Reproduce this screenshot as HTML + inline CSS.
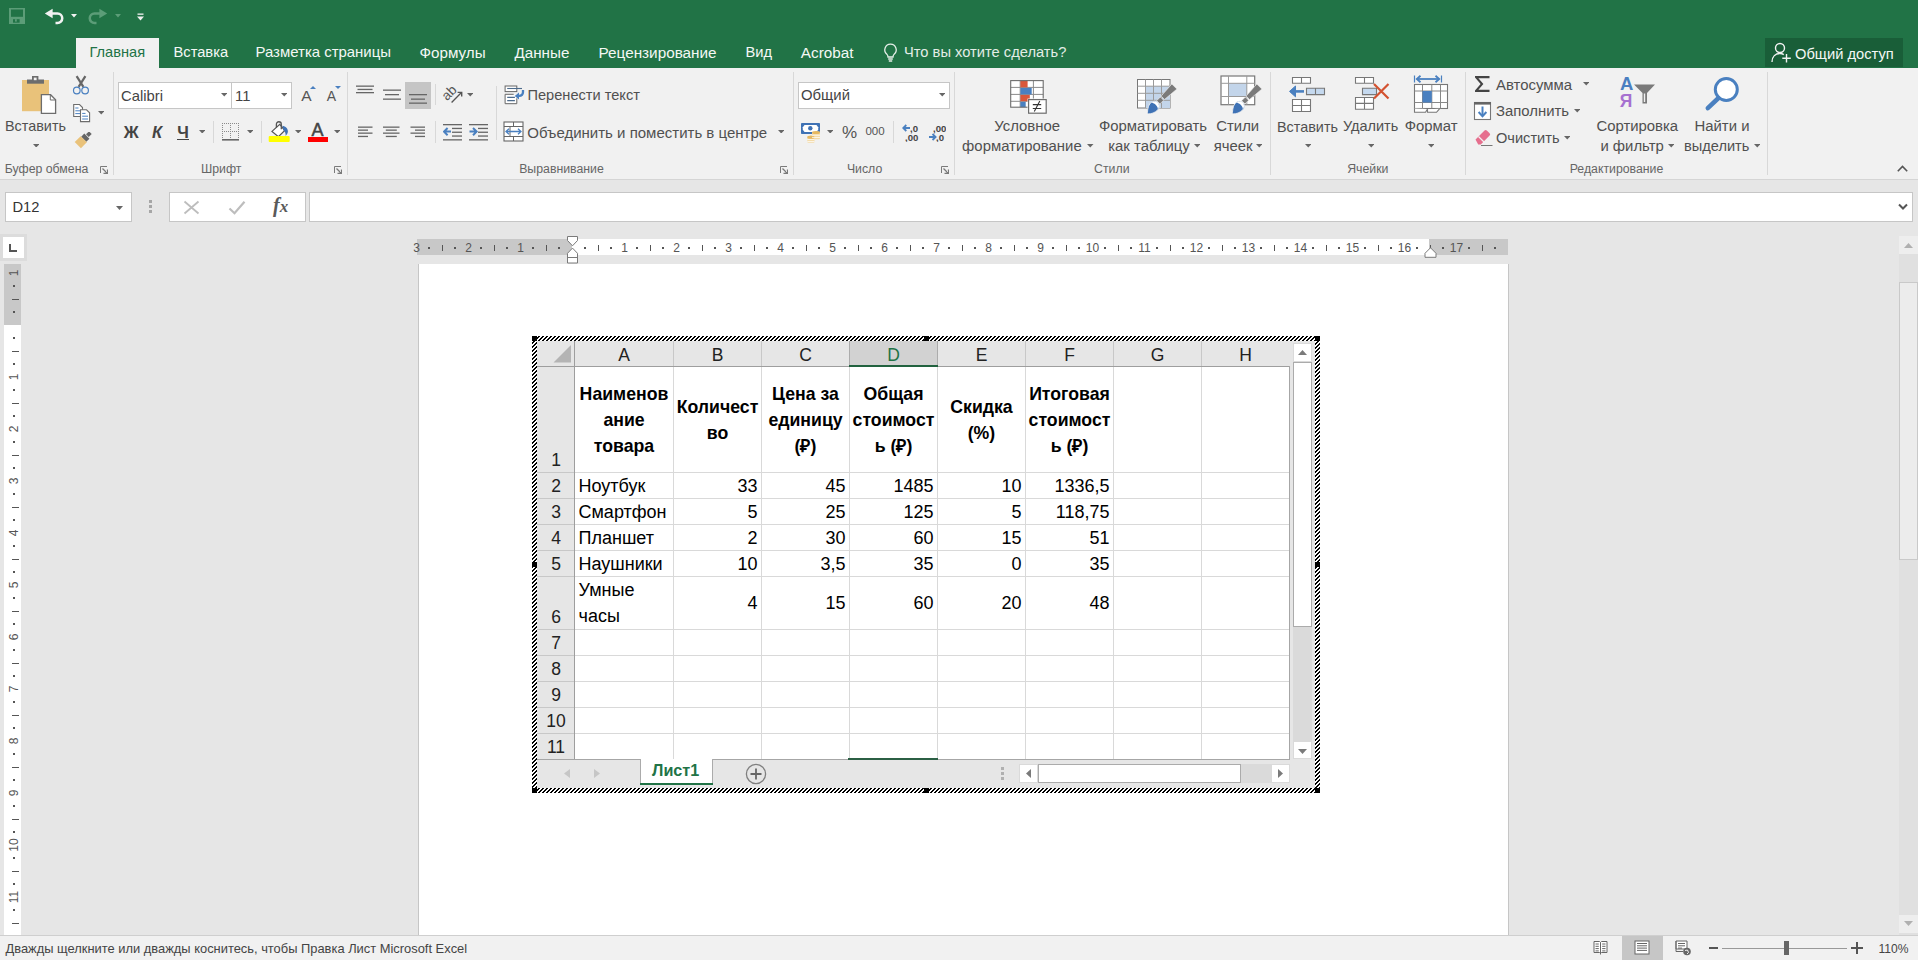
<!DOCTYPE html>
<html><head><meta charset="utf-8"><style>
html,body{margin:0;padding:0}
body{width:1918px;height:960px;overflow:hidden;position:relative;background:#e6e6e6;font-family:"Liberation Sans",sans-serif}
.t{position:absolute;line-height:1;white-space:pre}
.r{position:absolute;display:block}
</style></head><body>

<div class="r" style="left:0px;top:0px;width:1918px;height:68px;background:#217346;"></div>
<svg class="r" style="left:9px;top:8px" width="16" height="16" viewBox="0 0 16 16"><rect x="0" y="0" width="16" height="16" fill="#5c9d78"/>
<rect x="2" y="1.5" width="12" height="7.3" fill="#217346"/>
<rect x="4" y="11.2" width="6.6" height="3.5" fill="#217346"/>
<rect x="6" y="11.2" width="1.8" height="2.4" fill="#5c9d78"/></svg>
<svg class="r" style="left:44px;top:8px" width="20" height="17" viewBox="0 0 20 17"><path d="M5 5.5H13.5A4.75 4.75 0 0 1 13.5 15H11.5" fill="none" stroke="#f2f2f2" stroke-width="2.5"/>
<path d="M0.8 5.5L8.6 0.8V10.2Z" fill="#f2f2f2"/></svg>
<svg class="r" style="left:71.0px;top:14px" width="6" height="3.5" viewBox="0 0 6 3.5"><path d="M0 0H6L3.0 3.5Z" fill="#f2f2f2"/></svg>
<svg class="r" style="left:88px;top:8px" width="20" height="17" viewBox="0 0 20 17"><path d="M15 5.5H6.5A4.75 4.75 0 0 0 6.5 15H8.5" fill="none" stroke="#5c9d78" stroke-width="2.5"/>
<path d="M19.2 5.5L11.4 0.8V10.2Z" fill="#5c9d78"/></svg>
<svg class="r" style="left:115.0px;top:14px" width="6" height="3.5" viewBox="0 0 6 3.5"><path d="M0 0H6L3.0 3.5Z" fill="#5c9d78"/></svg>
<svg class="r" style="left:137px;top:13px" width="7" height="8" viewBox="0 0 7 8"><rect x="0.5" y="0.5" width="6" height="1.3" fill="#f2f2f2"/><path d="M0 3.5H7L3.5 7.5Z" fill="#f2f2f2"/></svg>
<div class="r" style="left:76px;top:38px;width:83px;height:30px;background:#f1f1f1;"></div>
<div class="t" style="left:89.50px;top:45.19px;font-size:14.6px;color:#217346;font-weight:normal;">Главная</div>
<div class="t" style="left:173.50px;top:45.11px;font-size:14.7px;color:#f4f8f5;font-weight:normal;">Вставка</div>
<div class="t" style="left:255.50px;top:44.89px;font-size:14.95px;color:#f4f8f5;font-weight:normal;">Разметка страницы</div>
<div class="t" style="left:419.50px;top:44.68px;font-size:15.2px;color:#f4f8f5;font-weight:normal;">Формулы</div>
<div class="t" style="left:514.50px;top:44.68px;font-size:15.2px;color:#f4f8f5;font-weight:normal;">Данные</div>
<div class="t" style="left:598.50px;top:44.59px;font-size:15.3px;color:#f4f8f5;font-weight:normal;">Рецензирование</div>
<div class="t" style="left:745.50px;top:45.11px;font-size:14.7px;color:#f4f8f5;font-weight:normal;">Вид</div>
<div class="t" style="left:800.80px;top:44.59px;font-size:15.3px;color:#f4f8f5;font-weight:normal;">Acrobat</div>
<svg class="r" style="left:883px;top:43px" width="15" height="19" viewBox="0 0 15 19"><path d="M7.5 1.2A5.6 5.6 0 0 0 3.6 10.9C4.6 12 5 12.8 5 14H10C10 12.8 10.4 12 11.4 10.9A5.6 5.6 0 0 0 7.5 1.2Z" fill="none" stroke="#e6efe9" stroke-width="1.3"/>
<path d="M5.2 16H9.8M5.8 18H9.2" stroke="#e6efe9" stroke-width="1.3"/></svg>
<div class="t" style="left:904.00px;top:45.11px;font-size:14.7px;color:#e3ede6;font-weight:normal;">Что вы хотите сделать?</div>
<div class="r" style="left:1765px;top:38px;width:138px;height:29px;background:#195e38;"></div>
<svg class="r" style="left:1771px;top:42px" width="21" height="21" viewBox="0 0 21 21"><circle cx="9" cy="6" r="4.5" fill="none" stroke="#f2f2f2" stroke-width="1.4"/>
<path d="M1 20C1 14.5 4.5 11.5 9 11.5C10.5 11.5 11.8 11.9 12.8 12.6" fill="none" stroke="#f2f2f2" stroke-width="1.4"/>
<path d="M15.5 12V20.5M11.3 16.2H19.8" stroke="#f2f2f2" stroke-width="1.4"/></svg>
<div class="t" style="left:1795.00px;top:46.80px;font-size:14.7px;color:#f4f8f5;font-weight:normal;">Общий доступ</div>
<div class="r" style="left:0px;top:68px;width:1918px;height:111px;background:#f1f1f1;"></div>
<div class="r" style="left:0px;top:179px;width:1918px;height:1px;background:#d5d5d5;"></div>
<div class="r" style="left:113px;top:72px;width:1px;height:103px;background:#d8d8d8;"></div>
<div class="r" style="left:347px;top:72px;width:1px;height:103px;background:#d8d8d8;"></div>
<div class="r" style="left:793px;top:72px;width:1px;height:103px;background:#d8d8d8;"></div>
<div class="r" style="left:954px;top:72px;width:1px;height:103px;background:#d8d8d8;"></div>
<div class="r" style="left:1270px;top:72px;width:1px;height:103px;background:#d8d8d8;"></div>
<div class="r" style="left:1465px;top:72px;width:1px;height:103px;background:#d8d8d8;"></div>
<div class="r" style="left:1767px;top:72px;width:1px;height:103px;background:#d8d8d8;"></div>
<div class="t" style="left:-53.50px;top:163.14px;width:200px;text-align:center;font-size:12.3px;color:#666666;font-weight:normal;">Буфер обмена</div>
<div class="t" style="left:121.20px;top:163.14px;width:200px;text-align:center;font-size:12.3px;color:#666666;font-weight:normal;">Шрифт</div>
<div class="t" style="left:461.50px;top:163.14px;width:200px;text-align:center;font-size:12.3px;color:#666666;font-weight:normal;">Выравнивание</div>
<div class="t" style="left:764.60px;top:163.14px;width:200px;text-align:center;font-size:12.3px;color:#666666;font-weight:normal;">Число</div>
<div class="t" style="left:1011.80px;top:163.14px;width:200px;text-align:center;font-size:12.3px;color:#666666;font-weight:normal;">Стили</div>
<div class="t" style="left:1267.80px;top:163.14px;width:200px;text-align:center;font-size:12.3px;color:#666666;font-weight:normal;">Ячейки</div>
<div class="t" style="left:1516.50px;top:163.14px;width:200px;text-align:center;font-size:12.3px;color:#666666;font-weight:normal;">Редактирование</div>
<svg class="r" style="left:99.5px;top:165.5px" width="8" height="8" viewBox="0 0 8 8"><path d="M0.5 7V0.5H7" fill="none" stroke="#7a7a7a" stroke-width="1"/><path d="M2.5 2.5L7 7M7.5 3.5V7.5H3.5" fill="none" stroke="#7a7a7a" stroke-width="1.3"/></svg>
<svg class="r" style="left:334px;top:165.5px" width="8" height="8" viewBox="0 0 8 8"><path d="M0.5 7V0.5H7" fill="none" stroke="#7a7a7a" stroke-width="1"/><path d="M2.5 2.5L7 7M7.5 3.5V7.5H3.5" fill="none" stroke="#7a7a7a" stroke-width="1.3"/></svg>
<svg class="r" style="left:779.5px;top:165.5px" width="8" height="8" viewBox="0 0 8 8"><path d="M0.5 7V0.5H7" fill="none" stroke="#7a7a7a" stroke-width="1"/><path d="M2.5 2.5L7 7M7.5 3.5V7.5H3.5" fill="none" stroke="#7a7a7a" stroke-width="1.3"/></svg>
<svg class="r" style="left:940.5px;top:165.5px" width="8" height="8" viewBox="0 0 8 8"><path d="M0.5 7V0.5H7" fill="none" stroke="#7a7a7a" stroke-width="1"/><path d="M2.5 2.5L7 7M7.5 3.5V7.5H3.5" fill="none" stroke="#7a7a7a" stroke-width="1.3"/></svg>
<svg class="r" style="left:1897px;top:165px" width="11" height="7" viewBox="0 0 11 7"><path d="M0.8 6.2L5.5 1.5L10.2 6.2" fill="none" stroke="#555" stroke-width="1.6"/></svg>
<svg class="r" style="left:21px;top:75px" width="36" height="40" viewBox="0 0 36 40"><rect x="1" y="5" width="27" height="31.2" fill="#e9c27a"/>
<path d="M6 4.5H23V8.7H6Z" fill="#6d6d6d"/>
<path d="M11 1H17.4V5H11Z" fill="#6d6d6d"/>
<rect x="12.8" y="2.6" width="2.8" height="2.6" fill="#f1f1f1"/>
<path d="M20.4 19.7H29.6L34.6 24.7V38.4H20.4Z" fill="#fff" stroke="#6d6d6d" stroke-width="1.3"/>
<path d="M29.3 19.7V25H34.6" fill="none" stroke="#6d6d6d" stroke-width="1"/></svg>
<div class="t" style="left:-14.50px;top:119.36px;width:100px;text-align:center;font-size:14.4px;color:#505050;font-weight:normal;">Вставить</div>
<svg class="r" style="left:32.75px;top:143.8px" width="6.5" height="3.5" viewBox="0 0 6.5 3.5"><path d="M0 0H6.5L3.25 3.5Z" fill="#666"/></svg>
<svg class="r" style="left:72px;top:75px" width="18" height="20" viewBox="0 0 18 20"><path d="M4.6 1.2L11.4 11.8M13.4 1.2L6.6 11.8" stroke="#666" stroke-width="2.2"/>
<circle cx="4.8" cy="15.5" r="3.3" fill="#f1f1f1" stroke="#4a80c0" stroke-width="1.2"/>
<circle cx="13.1" cy="15.5" r="3.3" fill="#f1f1f1" stroke="#4a80c0" stroke-width="1.2"/></svg>
<svg class="r" style="left:72px;top:103px" width="19" height="20" viewBox="0 0 19 20"><path d="M1.7 1.5H7.5L10.5 4.5V13.5H1.7Z" fill="#fff" stroke="#6d6d6d" stroke-width="1.1"/>
<path d="M3.3 5H6.5M3.3 7.8H8.5M3.3 10.6H8.5" stroke="#4a80c0" stroke-width="1"/>
<path d="M8.5 6.8H14.5L17.6 9.8V18.6H8.5Z" fill="#fff" stroke="#6d6d6d" stroke-width="1.1"/>
<path d="M10.2 10.4H13.5M10.2 13.2H16M10.2 16H16" stroke="#4a80c0" stroke-width="1"/></svg>
<svg class="r" style="left:97.75px;top:111px" width="6.5" height="3.5" viewBox="0 0 6.5 3.5"><path d="M0 0H6.5L3.25 3.5Z" fill="#666"/></svg>
<svg class="r" style="left:72px;top:132px" width="20" height="18" viewBox="0 0 20 18"><g transform="translate(10.2,8.8) rotate(45)">
<rect x="-1.9" y="-11.5" width="3.8" height="4.2" fill="#666"/>
<rect x="-3.6" y="-6.6" width="7.2" height="4.4" fill="#666"/>
<path d="M-4.4 -2.2H4.4V6.2H-4.4Z" fill="#e9c27a"/>
</g></svg>
<div class="r" style="left:118px;top:82px;width:114px;height:27px;background:#fff;border:1px solid #c6c6c6;box-sizing:border-box"></div>
<div class="r" style="left:231px;top:82px;width:61px;height:27px;background:#fff;border:1px solid #c6c6c6;box-sizing:border-box"></div>
<div class="t" style="left:121.00px;top:88.62px;font-size:14.8px;color:#444;font-weight:normal;">Calibri</div>
<div class="t" style="left:235.00px;top:88.62px;font-size:14.8px;color:#444;font-weight:normal;">11</div>
<svg class="r" style="left:220.55px;top:93px" width="6.5" height="3.5" viewBox="0 0 6.5 3.5"><path d="M0 0H6.5L3.25 3.5Z" fill="#666"/></svg>
<svg class="r" style="left:280.55px;top:93px" width="6.5" height="3.5" viewBox="0 0 6.5 3.5"><path d="M0 0H6.5L3.25 3.5Z" fill="#666"/></svg>
<div class="t" style="left:291.50px;top:88.12px;width:30px;text-align:center;font-size:15.5px;color:#555;font-weight:normal;">A</div>
<svg class="r" style="left:309.5px;top:85.5px" width="6" height="3" viewBox="0 0 6 3"><path d="M0 3L3 0L6 3Z" fill="#4a80c0"/></svg>
<div class="t" style="left:316.50px;top:89.40px;width:30px;text-align:center;font-size:14px;color:#555;font-weight:normal;">A</div>
<svg class="r" style="left:334.5px;top:85.5px" width="6" height="3" viewBox="0 0 6 3"><path d="M0 0H6L3 3Z" fill="#4a80c0"/></svg>
<div class="t" style="left:116.20px;top:123.78px;width:30px;text-align:center;font-size:16.5px;color:#444;font-weight:bold;">Ж</div>
<div class="t" style="left:142.00px;top:123.78px;width:30px;text-align:center;font-size:16.5px;color:#444;font-weight:bold;font-style:italic">К</div>
<div class="t" style="left:168.00px;top:123.78px;width:30px;text-align:center;font-size:16.5px;color:#444;font-weight:bold;">Ч</div>
<div class="r" style="left:177px;top:139px;width:12px;height:1.2px;background:#444;"></div>
<svg class="r" style="left:198.75px;top:129.8px" width="6.5" height="3.5" viewBox="0 0 6.5 3.5"><path d="M0 0H6.5L3.25 3.5Z" fill="#666"/></svg>
<div class="r" style="left:213px;top:121px;width:1px;height:22px;background:#d8d8d8;"></div>
<svg class="r" style="left:222px;top:123px" width="17" height="18" viewBox="0 0 17 18"><g fill="#8a8a8a" shape-rendering="crispEdges"><rect x="0" y="0" width="1" height="1"/><rect x="0" y="8" width="1" height="1"/><rect x="2" y="0" width="1" height="1"/><rect x="2" y="8" width="1" height="1"/><rect x="4" y="0" width="1" height="1"/><rect x="4" y="8" width="1" height="1"/><rect x="6" y="0" width="1" height="1"/><rect x="6" y="8" width="1" height="1"/><rect x="8" y="0" width="1" height="1"/><rect x="8" y="8" width="1" height="1"/><rect x="10" y="0" width="1" height="1"/><rect x="10" y="8" width="1" height="1"/><rect x="12" y="0" width="1" height="1"/><rect x="12" y="8" width="1" height="1"/><rect x="14" y="0" width="1" height="1"/><rect x="14" y="8" width="1" height="1"/><rect x="16" y="0" width="1" height="1"/><rect x="16" y="8" width="1" height="1"/><rect x="0" y="2" width="1" height="1"/><rect x="8" y="2" width="1" height="1"/><rect x="16" y="2" width="1" height="1"/><rect x="0" y="4" width="1" height="1"/><rect x="8" y="4" width="1" height="1"/><rect x="16" y="4" width="1" height="1"/><rect x="0" y="6" width="1" height="1"/><rect x="8" y="6" width="1" height="1"/><rect x="16" y="6" width="1" height="1"/><rect x="0" y="8" width="1" height="1"/><rect x="8" y="8" width="1" height="1"/><rect x="16" y="8" width="1" height="1"/><rect x="0" y="10" width="1" height="1"/><rect x="8" y="10" width="1" height="1"/><rect x="16" y="10" width="1" height="1"/><rect x="0" y="12" width="1" height="1"/><rect x="8" y="12" width="1" height="1"/><rect x="16" y="12" width="1" height="1"/><rect x="0" y="14" width="1" height="1"/><rect x="8" y="14" width="1" height="1"/><rect x="16" y="14" width="1" height="1"/></g><rect x="0" y="16" width="17" height="1.6" fill="#666"/></svg>
<svg class="r" style="left:246.55px;top:129.8px" width="6.5" height="3.5" viewBox="0 0 6.5 3.5"><path d="M0 0H6.5L3.25 3.5Z" fill="#666"/></svg>
<div class="r" style="left:261px;top:121px;width:1px;height:22px;background:#d8d8d8;"></div>
<svg class="r" style="left:264px;top:118px" width="30" height="26" viewBox="0 0 30 26"><path d="M8 13.4L15.8 6.3L20.8 12.5L14.4 18.7Z" fill="#fff" stroke="#555" stroke-width="1.2"/>
<path d="M12.4 9.8V6.2A2.45 2.45 0 0 1 17.3 6.2V11.3" fill="none" stroke="#555" stroke-width="1.3"/>
<path d="M18.4 7.8C21.6 8.4 24.1 10.6 23.9 13.6C23.7 15.6 22.7 17 21.6 18.1C21.9 15.6 21.2 13.6 19.6 12.6Z" fill="#3f72b5"/>
<rect x="4.7" y="18" width="21" height="6" rx="1" fill="#ffff00"/></svg>
<svg class="r" style="left:294.75px;top:129.8px" width="6.5" height="3.5" viewBox="0 0 6.5 3.5"><path d="M0 0H6.5L3.25 3.5Z" fill="#666"/></svg>
<div class="t" style="left:302.40px;top:120.50px;width:30px;text-align:center;font-size:18px;color:#444;font-weight:normal;-webkit-text-stroke:0.5px #444">A</div>
<div class="r" style="left:308px;top:137px;width:20px;height:5px;background:#ff0000;"></div>
<svg class="r" style="left:333.55px;top:129.8px" width="6.5" height="3.5" viewBox="0 0 6.5 3.5"><path d="M0 0H6.5L3.25 3.5Z" fill="#666"/></svg>
<svg class="r" style="left:356px;top:84px" width="20" height="10" viewBox="0 0 20 10"><rect x="0" y="1.5" width="18" height="1.3" fill="#666"/><rect x="1.5" y="4.8" width="15" height="1.3" fill="#666"/><rect x="0" y="8" width="18" height="1.3" fill="#666"/></svg>
<svg class="r" style="left:382px;top:88px" width="20" height="13" viewBox="0 0 20 13"><rect x="1" y="1.5" width="18" height="1.3" fill="#666"/><rect x="3" y="6" width="14" height="1.3" fill="#666"/><rect x="1" y="10.5" width="18" height="1.3" fill="#666"/></svg>
<div class="r" style="left:405px;top:82px;width:26px;height:27px;background:#c5c5c5;"></div>
<svg class="r" style="left:408px;top:92px" width="20" height="13" viewBox="0 0 20 13"><rect x="1" y="2" width="18" height="1.3" fill="#666"/><rect x="3" y="6.5" width="14" height="1.3" fill="#666"/><rect x="1" y="10.5" width="18" height="1.3" fill="#666"/></svg>
<div class="r" style="left:435px;top:84px;width:1px;height:21px;background:#d8d8d8;"></div>
<svg class="r" style="left:440px;top:82px" width="24" height="24" viewBox="0 0 24 24"><text x="0" y="0" text-anchor="middle" transform="translate(12.2,14) rotate(-45)" font-family="Liberation Sans" font-size="13.5" fill="#555">ab</text>
<path d="M11.6 20.5L21.2 10.8" stroke="#555" stroke-width="1.3"/><path d="M17.6 10.4H21.7V14.5" fill="none" stroke="#555" stroke-width="1.4"/></svg>
<svg class="r" style="left:466.75px;top:93px" width="6.5" height="3.5" viewBox="0 0 6.5 3.5"><path d="M0 0H6.5L3.25 3.5Z" fill="#666"/></svg>
<svg class="r" style="left:358px;top:126px" width="16" height="12" viewBox="0 0 16 12"><rect x="0" y="0.5" width="14.5" height="1.3" fill="#666"/><rect x="0" y="3.5" width="10" height="1.3" fill="#666"/><rect x="0" y="6.5" width="14.5" height="1.3" fill="#666"/><rect x="0" y="9.8" width="10" height="1.3" fill="#666"/></svg>
<svg class="r" style="left:383px;top:126px" width="18" height="12" viewBox="0 0 18 12"><rect x="0" y="0.5" width="16.5" height="1.3" fill="#666"/><rect x="2.8" y="3.5" width="11" height="1.3" fill="#666"/><rect x="0" y="6.5" width="16.5" height="1.3" fill="#666"/><rect x="2.8" y="9.8" width="11" height="1.3" fill="#666"/></svg>
<svg class="r" style="left:410px;top:126px" width="16" height="12" viewBox="0 0 16 12"><rect x="0.5" y="0.5" width="14.5" height="1.3" fill="#666"/><rect x="5" y="3.5" width="10" height="1.3" fill="#666"/><rect x="0.5" y="6.5" width="14.5" height="1.3" fill="#666"/><rect x="5" y="9.8" width="10" height="1.3" fill="#666"/></svg>
<div class="r" style="left:435px;top:121px;width:1px;height:22px;background:#d8d8d8;"></div>
<svg class="r" style="left:443px;top:123px" width="20" height="18" viewBox="0 0 20 18"><rect x="0" y="1" width="19" height="1.3" fill="#666"/><rect x="0" y="16.2" width="19" height="1.3" fill="#666"/><rect x="9" y="4.8" width="10" height="1.3" fill="#666"/><rect x="9" y="8.6" width="10" height="1.3" fill="#666"/><rect x="9" y="12.4" width="10" height="1.3" fill="#666"/>
<path d="M1 8.6H8M4.6 5L1 8.6L4.6 12.2" fill="none" stroke="#4a80c0" stroke-width="2"/></svg>
<svg class="r" style="left:469px;top:123px" width="20" height="18" viewBox="0 0 20 18"><rect x="0" y="1" width="19" height="1.3" fill="#666"/><rect x="0" y="16.2" width="19" height="1.3" fill="#666"/><rect x="9" y="4.8" width="10" height="1.3" fill="#666"/><rect x="9" y="8.6" width="10" height="1.3" fill="#666"/><rect x="9" y="12.4" width="10" height="1.3" fill="#666"/>
<path d="M0.5 8.6H7.5M4 5L7.6 8.6L4 12.2" fill="none" stroke="#4a80c0" stroke-width="2"/></svg>
<div class="r" style="left:496px;top:86px;width:1px;height:54px;background:#d8d8d8;"></div>
<svg class="r" style="left:504px;top:85px" width="21" height="20" viewBox="0 0 21 20"><rect x="1.1" y="1" width="11.7" height="5.6" fill="#fff" stroke="#666" stroke-width="1"/>
<path d="M3.2 3.5H18" stroke="#4d6b8c" stroke-width="1.1"/>
<path d="M9.7 9.3H1.1V18.7H12.8V13.3" fill="#fff" stroke="#666" stroke-width="1"/>
<path d="M3.2 12.4H10.9M3.2 15.6H10.9" stroke="#4d6b8c" stroke-width="1.1"/>
<path d="M19 5V7.3A3.6 3.6 0 0 1 15.4 10.9H13.5" fill="none" stroke="#4a80c0" stroke-width="2.3"/>
<path d="M10.8 10.9L15 7.4V14.4Z" fill="#4a80c0"/></svg>
<div class="t" style="left:527.50px;top:88.39px;font-size:14.6px;color:#505050;font-weight:normal;">Перенести текст</div>
<svg class="r" style="left:503px;top:121px" width="21" height="21" viewBox="0 0 21 21"><rect x="1" y="1" width="19" height="19" fill="#fff" stroke="#666" stroke-width="1.1"/>
<path d="M1 5.5H20M1 15.5H20M10.5 1V5.5M10.5 15.5V20M7 5.5V15.5" stroke="#666" stroke-width="1" fill="none"/>
<path d="M3 10.5H18M6 7.7L3 10.5L6 13.3M15 7.7L18 10.5L15 13.3" fill="none" stroke="#4a80c0" stroke-width="1.3"/></svg>
<div class="t" style="left:527.30px;top:124.55px;font-size:15.0px;color:#505050;font-weight:normal;">Объединить и поместить в центре</div>
<svg class="r" style="left:777.75px;top:129.8px" width="6.5" height="3.5" viewBox="0 0 6.5 3.5"><path d="M0 0H6.5L3.25 3.5Z" fill="#666"/></svg>
<div class="r" style="left:798px;top:82px;width:152px;height:27px;background:#fff;border:1px solid #c6c6c6;box-sizing:border-box"></div>
<div class="t" style="left:801.00px;top:88.34px;font-size:14.9px;color:#444;font-weight:normal;">Общий</div>
<svg class="r" style="left:938.55px;top:93px" width="6.5" height="3.5" viewBox="0 0 6.5 3.5"><path d="M0 0H6.5L3.25 3.5Z" fill="#666"/></svg>
<svg class="r" style="left:800px;top:121px" width="22" height="22" viewBox="0 0 22 22"><rect x="1" y="2" width="19" height="11" rx="0.8" fill="#3f72b5"/>
<path d="M4.5 4H16.5L18.2 6.3V8.7L16.5 11H4.5L2.8 8.7V6.3Z" fill="#fff"/>
<circle cx="10.3" cy="7.3" r="2.2" fill="#3f72b5"/>
<g fill="#f3d9a4"><rect x="12" y="10.5" width="8" height="7.8" rx="1"/><rect x="7.3" y="15" width="7.2" height="6.8" rx="1"/></g>
<g fill="#e6b860"><ellipse cx="16" cy="11.5" rx="4" ry="1.6"/><ellipse cx="10.9" cy="16.2" rx="3.6" ry="1.6"/></g>
<g stroke="#fff" stroke-width="0.8"><path d="M12 14.2H20M12 16.4H20M7.3 18.6H14.5M7.3 20.6H14.5"/></g></svg>
<svg class="r" style="left:826.75px;top:129.8px" width="6.5" height="3.5" viewBox="0 0 6.5 3.5"><path d="M0 0H6.5L3.25 3.5Z" fill="#666"/></svg>
<div class="t" style="left:834.50px;top:124.35px;width:30px;text-align:center;font-size:17px;color:#555;font-weight:normal;">%</div>
<div class="t" style="left:860.00px;top:126.03px;width:30px;text-align:center;font-size:11.5px;color:#555;font-weight:normal;">000</div>
<div class="r" style="left:893px;top:121px;width:1px;height:22px;background:#d8d8d8;"></div>
<svg class="r" style="left:902px;top:123px" width="18" height="19" viewBox="0 0 18 19"><text x="8" y="8.5" font-family="Liberation Sans" font-weight="bold" font-size="9.6" fill="#444">,0</text>
<text x="3" y="17.5" font-family="Liberation Sans" font-weight="bold" font-size="9.6" fill="#444">,00</text>
<path d="M1.5 5H8M4.3 2L1.2 5L4.3 8" fill="none" stroke="#4a80c0" stroke-width="1.8"/></svg>
<svg class="r" style="left:928px;top:123px" width="18" height="19" viewBox="0 0 18 19"><text x="5" y="8.5" font-family="Liberation Sans" font-weight="bold" font-size="9.6" fill="#444">,00</text>
<text x="8" y="17.5" font-family="Liberation Sans" font-weight="bold" font-size="9.6" fill="#444">,0</text>
<path d="M1 14H7.5M4.5 11L7.6 14L4.5 17" fill="none" stroke="#4a80c0" stroke-width="1.8"/></svg>
<svg class="r" style="left:1008px;top:78px" width="40" height="37" viewBox="0 0 40 37"><rect x="2.7" y="2.6" width="32.5" height="26.6" fill="#fff"/>
<path d="M2.7 9.4H35.2M2.7 16.4H35.2M2.7 23.3H35.2M12.2 2.6V29.2M25.4 2.6V29.2" stroke="#8a8a8a" stroke-width="1"/>
<rect x="12.4" y="2.6" width="7.2" height="6.8" fill="#d9573a"/>
<rect x="12.4" y="9.9" width="11.3" height="6.5" fill="#4a80c0"/>
<rect x="12.4" y="16.9" width="9.4" height="6.4" fill="#d9573a"/>
<rect x="12.4" y="23.8" width="5.3" height="5.4" fill="#4a80c0"/>
<rect x="2.7" y="2.6" width="32.5" height="26.6" fill="none" stroke="#6d6d6d" stroke-width="1.1"/>
<rect x="19.5" y="20.5" width="19.6" height="15.6" fill="#f1f1f1"/>
<rect x="20.6" y="21.6" width="17.6" height="13.6" fill="#fff" stroke="#6d6d6d" stroke-width="1.2"/>
<path d="M24.8 26.6H33.2M24.8 30.5H33.2M26.3 33.5L31.8 23.1" stroke="#333" stroke-width="1.1"/></svg>
<div class="t" style="left:967.20px;top:119.14px;width:120px;text-align:center;font-size:14.9px;color:#505050;font-weight:normal;">Условное</div>
<div class="t" style="left:946.90px;top:139.14px;width:150px;text-align:center;font-size:14.9px;color:#505050;font-weight:normal;">форматирование</div>
<svg class="r" style="left:1087.25px;top:144px" width="6.5" height="3.5" viewBox="0 0 6.5 3.5"><path d="M0 0H6.5L3.25 3.5Z" fill="#666"/></svg>
<svg class="r" style="left:1130px;top:72px" width="48" height="46" viewBox="0 0 48 46"><rect x="7.5" y="7.5" width="32.5" height="28.5" fill="#fff" stroke="#777" stroke-width="1"/>
<rect x="15.5" y="14.2" width="24.5" height="21.8" fill="#c3d5ea"/>
<path d="M7.5 14.2H40M7.5 21.3H40M7.5 28.3H40M15.5 7.5V36M23.5 7.5V36M31.5 7.5V36" stroke="#9a9a9a" stroke-width="1"/>
<g transform="translate(17,41.6) rotate(-45)">
<path d="M0 0.5C3 -2 6 -5 10.5 -5A5 5 0 0 1 10.5 5C6 5 3 3.5 0 0.5Z" fill="#3f72b5" stroke="#f1f1f1" stroke-width="0.8"/>
<path d="M10.8 -4.4A4.4 4.4 0 0 1 10.8 4.4C12.8 3 12.8 -3 10.8 -4.4Z" fill="#fff"/>
<path d="M16 -2.3H21.2V2.3H16Z" fill="#7a7a7a" stroke="#f1f1f1" stroke-width="0.6"/>
<path d="M22.4 -2.4L38.5 -3.4V3.8L22.4 2.4Z" fill="#7a7a7a" stroke="#f1f1f1" stroke-width="0.6"/>
</g></svg>
<div class="t" style="left:1078.00px;top:119.14px;width:150px;text-align:center;font-size:14.9px;color:#505050;font-weight:normal;">Форматировать</div>
<div class="t" style="left:1074.00px;top:139.14px;width:150px;text-align:center;font-size:14.9px;color:#505050;font-weight:normal;">как таблицу</div>
<svg class="r" style="left:1193.75px;top:144px" width="6.5" height="3.5" viewBox="0 0 6.5 3.5"><path d="M0 0H6.5L3.25 3.5Z" fill="#666"/></svg>
<svg class="r" style="left:1216px;top:72px" width="48" height="46" viewBox="0 0 48 46"><rect x="5" y="4" width="33.7" height="28.7" fill="#fff" stroke="#777" stroke-width="1.2"/>
<rect x="12.5" y="11.3" width="18.3" height="13.2" fill="#c3d5ea"/>
<path d="M5 11.3H38.7M5 24.5H38.7M12.5 4V32.7M30.8 4V32.7" stroke="#9a9a9a" stroke-width="1"/>
<g transform="translate(16,41.6) rotate(-45)">
<path d="M0 0.5C3 -2 6 -5 10.5 -5A5 5 0 0 1 10.5 5C6 5 3 3.5 0 0.5Z" fill="#3f72b5" stroke="#f1f1f1" stroke-width="0.8"/>
<path d="M10.8 -4.4A4.4 4.4 0 0 1 10.8 4.4C12.8 3 12.8 -3 10.8 -4.4Z" fill="#fff"/>
<path d="M16 -2.3H21.2V2.3H16Z" fill="#7a7a7a" stroke="#f1f1f1" stroke-width="0.6"/>
<path d="M22.4 -2.4L38.5 -3.4V3.8L22.4 2.4Z" fill="#7a7a7a" stroke="#f1f1f1" stroke-width="0.6"/>
</g></svg>
<div class="t" style="left:1197.70px;top:119.14px;width:80px;text-align:center;font-size:14.9px;color:#505050;font-weight:normal;">Стили</div>
<div class="t" style="left:1193.20px;top:139.14px;width:80px;text-align:center;font-size:14.9px;color:#505050;font-weight:normal;">ячеек</div>
<svg class="r" style="left:1255.95px;top:144px" width="6.5" height="3.5" viewBox="0 0 6.5 3.5"><path d="M0 0H6.5L3.25 3.5Z" fill="#666"/></svg>
<svg class="r" style="left:1287px;top:75px" width="40" height="40" viewBox="0 0 40 40"><path d="M5.5 2.5H23.5V8.3H5.5ZM14.5 2.5V8.3" fill="#fff" stroke="#777" stroke-width="1.1"/>
<path d="M19.5 13.2H37.5V19.6H19.5ZM28.5 13.2V19.6" fill="#c5d9ef" stroke="#777" stroke-width="1.1"/>
<path d="M5.5 24.5H23.5V36.5H5.5ZM14.5 24.5V36.5M5.5 30.5H23.5" fill="#fff" stroke="#777" stroke-width="1.1"/>
<path d="M4 16.4H17" stroke="#4a80c0" stroke-width="2.6"/><path d="M8.5 11L2.5 16.4L8.5 21.8Z" fill="#4a80c0" stroke="#4a80c0" stroke-width="1"/></svg>
<div class="t" style="left:1257.50px;top:119.56px;width:100px;text-align:center;font-size:14.4px;color:#505050;font-weight:normal;">Вставить</div>
<svg class="r" style="left:1304.75px;top:144px" width="6.5" height="3.5" viewBox="0 0 6.5 3.5"><path d="M0 0H6.5L3.25 3.5Z" fill="#666"/></svg>
<svg class="r" style="left:1352px;top:75px" width="40" height="40" viewBox="0 0 40 40"><path d="M3.5 2.5H21.5V8.3H3.5ZM12.5 2.5V8.3" fill="#fff" stroke="#777" stroke-width="1.1"/>
<path d="M10.5 13.2H24.5V19.6H10.5Z" fill="#c5d9ef" stroke="#777" stroke-width="1.1"/>
<path d="M3.5 22.5H21.5V34.3H3.5ZM12.5 22.5V34.3M3.5 28.4H21.5" fill="#fff" stroke="#777" stroke-width="1.1"/>
<path d="M22 9L36.5 23.5M36.5 9L22 23.5" stroke="#d35230" stroke-width="2.2"/></svg>
<div class="t" style="left:1320.60px;top:119.48px;width:100px;text-align:center;font-size:14.5px;color:#505050;font-weight:normal;">Удалить</div>
<svg class="r" style="left:1367.75px;top:144px" width="6.5" height="3.5" viewBox="0 0 6.5 3.5"><path d="M0 0H6.5L3.25 3.5Z" fill="#666"/></svg>
<svg class="r" style="left:1412px;top:74px" width="40" height="40" viewBox="0 0 40 40"><path d="M2.5 1.5V8.5M29.5 1.5V8.5" stroke="#4a80c0" stroke-width="1.2"/>
<path d="M4.8 5H27.2" stroke="#4a80c0" stroke-width="1.8"/><path d="M8.5 1.8L4.8 5L8.5 8.2M23.5 1.8L27.2 5L23.5 8.2" fill="none" stroke="#4a80c0" stroke-width="1.8"/>
<rect x="2.5" y="10.5" width="33" height="24" fill="#fff" stroke="#777" stroke-width="1.1"/>
<path d="M2.5 17H35.5M2.5 28.5H35.5M10.5 10.5V34.5M19.8 10.5V34.5M28.5 10.5V34.5" stroke="#888" stroke-width="1"/>
<rect x="10.5" y="17" width="9.3" height="11.5" fill="#4a80c0"/>
<path d="M2.5 34.5V38.3H13.5L15.5 35M15.5 35.2V38.3H24.5L27.5 34.8" fill="#fff" stroke="#777" stroke-width="1.1"/></svg>
<div class="t" style="left:1381.20px;top:119.14px;width:100px;text-align:center;font-size:14.9px;color:#505050;font-weight:normal;">Формат</div>
<svg class="r" style="left:1427.75px;top:144px" width="6.5" height="3.5" viewBox="0 0 6.5 3.5"><path d="M0 0H6.5L3.25 3.5Z" fill="#666"/></svg>
<svg class="r" style="left:1474px;top:75px" width="17" height="18" viewBox="0 0 17 18"><path d="M1 1H15.5V3.3H4.4L9.4 9L4.4 14.7H15.5V17H1V15.4L6.6 9L1 2.6Z" fill="#444"/></svg>
<div class="t" style="left:1496.00px;top:77.74px;font-size:14.9px;color:#505050;font-weight:normal;">Автосумма</div>
<svg class="r" style="left:1582.55px;top:82.4px" width="6.5" height="3.5" viewBox="0 0 6.5 3.5"><path d="M0 0H6.5L3.25 3.5Z" fill="#666"/></svg>
<svg class="r" style="left:1473px;top:101px" width="19" height="20" viewBox="0 0 19 20"><rect x="1.5" y="1.5" width="16" height="17" fill="#fff" stroke="#777" stroke-width="1.1"/>
<rect x="1" y="1" width="17" height="2.6" fill="#666"/>
<path d="M9.5 5.5V14.5" stroke="#4a80c0" stroke-width="2"/><path d="M5.6 11L9.5 15.2L13.4 11" fill="none" stroke="#4a80c0" stroke-width="2"/></svg>
<div class="t" style="left:1496.00px;top:104.13px;font-size:14.9px;color:#505050;font-weight:normal;">Заполнить</div>
<svg class="r" style="left:1573.75px;top:109.2px" width="6.5" height="3.5" viewBox="0 0 6.5 3.5"><path d="M0 0H6.5L3.25 3.5Z" fill="#666"/></svg>
<svg class="r" style="left:1474px;top:128px" width="20" height="19" viewBox="0 0 20 19"><path d="M1.5 11.5L10.5 2.5A1.6 1.6 0 0 1 12.8 2.5L15.6 5.3A1.6 1.6 0 0 1 15.6 7.6L6.8 16.4H4.2Z" fill="#e66f8e"/>
<path d="M4.5 8.5L10 14" stroke="#f1f1f1" stroke-width="1.2"/>
<path d="M7 17.5H18.5" stroke="#777" stroke-width="1"/></svg>
<div class="t" style="left:1496.00px;top:131.29px;font-size:14.6px;color:#505050;font-weight:normal;">Очистить</div>
<svg class="r" style="left:1563.75px;top:136px" width="6.5" height="3.5" viewBox="0 0 6.5 3.5"><path d="M0 0H6.5L3.25 3.5Z" fill="#666"/></svg>
<div class="t" style="left:1611.80px;top:74.88px;width:30px;text-align:center;font-size:18.5px;color:#4a7fc1;font-weight:bold;">A</div>
<div class="t" style="left:1611.00px;top:92.72px;width:30px;text-align:center;font-size:17.5px;color:#a670d0;font-weight:bold;">Я</div>
<svg class="r" style="left:1633px;top:83px" width="24" height="22" viewBox="0 0 24 22"><path d="M1 1.5H22L14 10V20.5H9.5V10Z" fill="#7a7a7a"/><path d="M11.5 10.5V19" stroke="#f1f1f1" stroke-width="1.4"/></svg>
<div class="t" style="left:1577.30px;top:119.14px;width:120px;text-align:center;font-size:14.9px;color:#505050;font-weight:normal;">Сортировка</div>
<div class="t" style="left:1572.10px;top:139.14px;width:120px;text-align:center;font-size:14.9px;color:#505050;font-weight:normal;">и фильтр</div>
<svg class="r" style="left:1667.75px;top:144.3px" width="6.5" height="3.5" viewBox="0 0 6.5 3.5"><path d="M0 0H6.5L3.25 3.5Z" fill="#666"/></svg>
<svg class="r" style="left:1703px;top:75px" width="38" height="38" viewBox="0 0 38 38"><circle cx="23.3" cy="14.5" r="11" fill="#fff" stroke="#4a80c0" stroke-width="3"/>
<path d="M15.5 23L4.8 33.2" stroke="#4a80c0" stroke-width="4.5" stroke-linecap="round"/></svg>
<div class="t" style="left:1672.00px;top:119.34px;width:100px;text-align:center;font-size:14.9px;color:#505050;font-weight:normal;">Найти и</div>
<div class="t" style="left:1666.70px;top:139.39px;width:100px;text-align:center;font-size:14.6px;color:#505050;font-weight:normal;">выделить</div>
<svg class="r" style="left:1753.75px;top:144px" width="6.5" height="3.5" viewBox="0 0 6.5 3.5"><path d="M0 0H6.5L3.25 3.5Z" fill="#666"/></svg>
<div class="r" style="left:5px;top:192px;width:126px;height:29px;background:#fff;border:1px solid #c6c6c6;box-sizing:border-box;width:127px;height:30px"></div>
<div class="t" style="left:12.50px;top:200.10px;font-size:14.7px;color:#333;font-weight:normal;">D12</div>
<svg class="r" style="left:116.0px;top:206px" width="7" height="4" viewBox="0 0 7 4"><path d="M0 0H7L3.5 4Z" fill="#666"/></svg>
<div class="r" style="left:149px;top:200px;width:3px;height:3px;background:#a6a6a6;"></div>
<div class="r" style="left:149px;top:205px;width:3px;height:3px;background:#a6a6a6;"></div>
<div class="r" style="left:149px;top:210px;width:3px;height:3px;background:#a6a6a6;"></div>
<div class="r" style="left:169px;top:192px;width:137px;height:30px;background:#fff;border:1px solid #c6c6c6;box-sizing:border-box"></div>
<div class="r" style="left:309px;top:192px;width:1604px;height:30px;background:#fff;border:1px solid #c6c6c6;box-sizing:border-box"></div>
<svg class="r" style="left:1898px;top:203px" width="10" height="8" viewBox="0 0 10 8"><path d="M1 1.5L5 5.5L9 1.5" fill="none" stroke="#555" stroke-width="2"/></svg>
<svg class="r" style="left:183px;top:200px" width="17" height="15" viewBox="0 0 17 15"><path d="M1.5 1.5L15.5 13.5M15.5 1.5L1.5 13.5" stroke="#bdbdbd" stroke-width="1.8"/></svg>
<svg class="r" style="left:228px;top:200px" width="18" height="15" viewBox="0 0 18 15"><path d="M1.5 8.5L6.5 13.2L16.5 1.8" fill="none" stroke="#bdbdbd" stroke-width="2.2"/></svg>
<div class="t" style="left:273px;top:195px;font-family:'Liberation Serif',serif;font-style:italic;font-weight:bold;font-size:20px;color:#5a5a5a;line-height:1">f<span style="font-size:17px">x</span></div>
<div class="r" style="left:0px;top:234px;width:27px;height:27px;background:#dcdcdc;"></div>
<div class="r" style="left:3px;top:237px;width:21px;height:21px;background:#fff;"></div>
<svg class="r" style="left:9px;top:244px" width="8" height="8" viewBox="0 0 8 8"><path d="M1 0V7H8" fill="none" stroke="#555" stroke-width="2"/></svg>
<div class="r" style="left:417px;top:239px;width:1091px;height:16px;background:#c8c8c8;"></div>
<div class="r" style="left:572px;top:239px;width:857px;height:16px;background:#ffffff;"></div>
<div class="r" style="left:428px;top:247px;width:2px;height:2px;background:#555;"></div>
<div class="r" style="left:442px;top:245px;width:1px;height:6px;background:#555;"></div>
<div class="r" style="left:454px;top:247px;width:2px;height:2px;background:#555;"></div>
<div class="r" style="left:480px;top:247px;width:2px;height:2px;background:#555;"></div>
<div class="r" style="left:494px;top:245px;width:1px;height:6px;background:#555;"></div>
<div class="r" style="left:506px;top:247px;width:2px;height:2px;background:#555;"></div>
<div class="r" style="left:532px;top:247px;width:2px;height:2px;background:#555;"></div>
<div class="r" style="left:546px;top:245px;width:1px;height:6px;background:#555;"></div>
<div class="r" style="left:558px;top:247px;width:2px;height:2px;background:#555;"></div>
<div class="r" style="left:584px;top:247px;width:2px;height:2px;background:#555;"></div>
<div class="r" style="left:598px;top:245px;width:1px;height:6px;background:#555;"></div>
<div class="r" style="left:610px;top:247px;width:2px;height:2px;background:#555;"></div>
<div class="r" style="left:636px;top:247px;width:2px;height:2px;background:#555;"></div>
<div class="r" style="left:650px;top:245px;width:1px;height:6px;background:#555;"></div>
<div class="r" style="left:662px;top:247px;width:2px;height:2px;background:#555;"></div>
<div class="r" style="left:688px;top:247px;width:2px;height:2px;background:#555;"></div>
<div class="r" style="left:702px;top:245px;width:1px;height:6px;background:#555;"></div>
<div class="r" style="left:714px;top:247px;width:2px;height:2px;background:#555;"></div>
<div class="r" style="left:740px;top:247px;width:2px;height:2px;background:#555;"></div>
<div class="r" style="left:754px;top:245px;width:1px;height:6px;background:#555;"></div>
<div class="r" style="left:766px;top:247px;width:2px;height:2px;background:#555;"></div>
<div class="r" style="left:792px;top:247px;width:2px;height:2px;background:#555;"></div>
<div class="r" style="left:806px;top:245px;width:1px;height:6px;background:#555;"></div>
<div class="r" style="left:818px;top:247px;width:2px;height:2px;background:#555;"></div>
<div class="r" style="left:844px;top:247px;width:2px;height:2px;background:#555;"></div>
<div class="r" style="left:858px;top:245px;width:1px;height:6px;background:#555;"></div>
<div class="r" style="left:870px;top:247px;width:2px;height:2px;background:#555;"></div>
<div class="r" style="left:896px;top:247px;width:2px;height:2px;background:#555;"></div>
<div class="r" style="left:910px;top:245px;width:1px;height:6px;background:#555;"></div>
<div class="r" style="left:922px;top:247px;width:2px;height:2px;background:#555;"></div>
<div class="r" style="left:948px;top:247px;width:2px;height:2px;background:#555;"></div>
<div class="r" style="left:962px;top:245px;width:1px;height:6px;background:#555;"></div>
<div class="r" style="left:974px;top:247px;width:2px;height:2px;background:#555;"></div>
<div class="r" style="left:1000px;top:247px;width:2px;height:2px;background:#555;"></div>
<div class="r" style="left:1014px;top:245px;width:1px;height:6px;background:#555;"></div>
<div class="r" style="left:1026px;top:247px;width:2px;height:2px;background:#555;"></div>
<div class="r" style="left:1052px;top:247px;width:2px;height:2px;background:#555;"></div>
<div class="r" style="left:1066px;top:245px;width:1px;height:6px;background:#555;"></div>
<div class="r" style="left:1078px;top:247px;width:2px;height:2px;background:#555;"></div>
<div class="r" style="left:1104px;top:247px;width:2px;height:2px;background:#555;"></div>
<div class="r" style="left:1118px;top:245px;width:1px;height:6px;background:#555;"></div>
<div class="r" style="left:1130px;top:247px;width:2px;height:2px;background:#555;"></div>
<div class="r" style="left:1156px;top:247px;width:2px;height:2px;background:#555;"></div>
<div class="r" style="left:1170px;top:245px;width:1px;height:6px;background:#555;"></div>
<div class="r" style="left:1182px;top:247px;width:2px;height:2px;background:#555;"></div>
<div class="r" style="left:1208px;top:247px;width:2px;height:2px;background:#555;"></div>
<div class="r" style="left:1222px;top:245px;width:1px;height:6px;background:#555;"></div>
<div class="r" style="left:1234px;top:247px;width:2px;height:2px;background:#555;"></div>
<div class="r" style="left:1260px;top:247px;width:2px;height:2px;background:#555;"></div>
<div class="r" style="left:1274px;top:245px;width:1px;height:6px;background:#555;"></div>
<div class="r" style="left:1286px;top:247px;width:2px;height:2px;background:#555;"></div>
<div class="r" style="left:1312px;top:247px;width:2px;height:2px;background:#555;"></div>
<div class="r" style="left:1326px;top:245px;width:1px;height:6px;background:#555;"></div>
<div class="r" style="left:1338px;top:247px;width:2px;height:2px;background:#555;"></div>
<div class="r" style="left:1364px;top:247px;width:2px;height:2px;background:#555;"></div>
<div class="r" style="left:1378px;top:245px;width:1px;height:6px;background:#555;"></div>
<div class="r" style="left:1390px;top:247px;width:2px;height:2px;background:#555;"></div>
<div class="r" style="left:1416px;top:247px;width:2px;height:2px;background:#555;"></div>
<div class="r" style="left:1430px;top:245px;width:1px;height:6px;background:#555;"></div>
<div class="r" style="left:1442px;top:247px;width:2px;height:2px;background:#555;"></div>
<div class="r" style="left:1468px;top:247px;width:2px;height:2px;background:#555;"></div>
<div class="r" style="left:1482px;top:245px;width:1px;height:6px;background:#555;"></div>
<div class="r" style="left:1494px;top:247px;width:2px;height:2px;background:#555;"></div>
<div class="t" style="left:401.50px;top:241.80px;width:30px;text-align:center;font-size:12px;color:#555;font-weight:normal;">3</div>
<div class="t" style="left:453.50px;top:241.80px;width:30px;text-align:center;font-size:12px;color:#555;font-weight:normal;">2</div>
<div class="t" style="left:505.50px;top:241.80px;width:30px;text-align:center;font-size:12px;color:#555;font-weight:normal;">1</div>
<div class="t" style="left:609.50px;top:241.80px;width:30px;text-align:center;font-size:12px;color:#555;font-weight:normal;">1</div>
<div class="t" style="left:661.50px;top:241.80px;width:30px;text-align:center;font-size:12px;color:#555;font-weight:normal;">2</div>
<div class="t" style="left:713.50px;top:241.80px;width:30px;text-align:center;font-size:12px;color:#555;font-weight:normal;">3</div>
<div class="t" style="left:765.50px;top:241.80px;width:30px;text-align:center;font-size:12px;color:#555;font-weight:normal;">4</div>
<div class="t" style="left:817.50px;top:241.80px;width:30px;text-align:center;font-size:12px;color:#555;font-weight:normal;">5</div>
<div class="t" style="left:869.50px;top:241.80px;width:30px;text-align:center;font-size:12px;color:#555;font-weight:normal;">6</div>
<div class="t" style="left:921.50px;top:241.80px;width:30px;text-align:center;font-size:12px;color:#555;font-weight:normal;">7</div>
<div class="t" style="left:973.50px;top:241.80px;width:30px;text-align:center;font-size:12px;color:#555;font-weight:normal;">8</div>
<div class="t" style="left:1025.50px;top:241.80px;width:30px;text-align:center;font-size:12px;color:#555;font-weight:normal;">9</div>
<div class="t" style="left:1077.50px;top:241.80px;width:30px;text-align:center;font-size:12px;color:#555;font-weight:normal;">10</div>
<div class="t" style="left:1129.50px;top:241.80px;width:30px;text-align:center;font-size:12px;color:#555;font-weight:normal;">11</div>
<div class="t" style="left:1181.50px;top:241.80px;width:30px;text-align:center;font-size:12px;color:#555;font-weight:normal;">12</div>
<div class="t" style="left:1233.50px;top:241.80px;width:30px;text-align:center;font-size:12px;color:#555;font-weight:normal;">13</div>
<div class="t" style="left:1285.50px;top:241.80px;width:30px;text-align:center;font-size:12px;color:#555;font-weight:normal;">14</div>
<div class="t" style="left:1337.50px;top:241.80px;width:30px;text-align:center;font-size:12px;color:#555;font-weight:normal;">15</div>
<div class="t" style="left:1389.50px;top:241.80px;width:30px;text-align:center;font-size:12px;color:#555;font-weight:normal;">16</div>
<div class="t" style="left:1441.50px;top:241.80px;width:30px;text-align:center;font-size:12px;color:#555;font-weight:normal;">17</div>
<svg class="r" style="left:566px;top:236px" width="13" height="28" viewBox="0 0 13 28"><path d="M1.5 0.5H11.5V4.5L6.5 9.8L1.5 4.5Z" fill="#fff" stroke="#7a7a7a" stroke-width="1"/>
<path d="M6.5 12.1L11.5 17.3V27H1.5V17.3Z" fill="#fff" stroke="#7a7a7a" stroke-width="1"/>
<path d="M1.5 21.5H11.5" stroke="#7a7a7a" stroke-width="1"/></svg>
<svg class="r" style="left:1424px;top:247px" width="13" height="11" viewBox="0 0 13 11"><path d="M6.5 0.8L12 6.3V10.3H1V6.3Z" fill="#fff" stroke="#7a7a7a" stroke-width="1"/></svg>
<div class="r" style="left:418px;top:264px;width:1091px;height:671px;background:#ffffff;border-left:1px solid #c6c6c6;border-right:1px solid #c6c6c6;box-sizing:border-box"></div>
<div class="r" style="left:4px;top:264px;width:17px;height:671px;background:#ffffff;"></div>
<div class="r" style="left:4px;top:264px;width:17px;height:61px;background:#c8c8c8;"></div>
<div class="r" style="left:13px;top:285px;width:2px;height:2px;background:#555;"></div>
<div class="r" style="left:12px;top:299px;width:7px;height:1px;background:#555;"></div>
<div class="r" style="left:13px;top:311px;width:2px;height:2px;background:#555;"></div>
<div class="r" style="left:13px;top:337px;width:2px;height:2px;background:#555;"></div>
<div class="r" style="left:12px;top:351px;width:7px;height:1px;background:#555;"></div>
<div class="r" style="left:13px;top:363px;width:2px;height:2px;background:#555;"></div>
<div class="r" style="left:13px;top:389px;width:2px;height:2px;background:#555;"></div>
<div class="r" style="left:12px;top:403px;width:7px;height:1px;background:#555;"></div>
<div class="r" style="left:13px;top:415px;width:2px;height:2px;background:#555;"></div>
<div class="r" style="left:13px;top:441px;width:2px;height:2px;background:#555;"></div>
<div class="r" style="left:12px;top:455px;width:7px;height:1px;background:#555;"></div>
<div class="r" style="left:13px;top:467px;width:2px;height:2px;background:#555;"></div>
<div class="r" style="left:13px;top:493px;width:2px;height:2px;background:#555;"></div>
<div class="r" style="left:12px;top:507px;width:7px;height:1px;background:#555;"></div>
<div class="r" style="left:13px;top:519px;width:2px;height:2px;background:#555;"></div>
<div class="r" style="left:13px;top:545px;width:2px;height:2px;background:#555;"></div>
<div class="r" style="left:12px;top:559px;width:7px;height:1px;background:#555;"></div>
<div class="r" style="left:13px;top:571px;width:2px;height:2px;background:#555;"></div>
<div class="r" style="left:13px;top:597px;width:2px;height:2px;background:#555;"></div>
<div class="r" style="left:12px;top:611px;width:7px;height:1px;background:#555;"></div>
<div class="r" style="left:13px;top:623px;width:2px;height:2px;background:#555;"></div>
<div class="r" style="left:13px;top:649px;width:2px;height:2px;background:#555;"></div>
<div class="r" style="left:12px;top:663px;width:7px;height:1px;background:#555;"></div>
<div class="r" style="left:13px;top:675px;width:2px;height:2px;background:#555;"></div>
<div class="r" style="left:13px;top:701px;width:2px;height:2px;background:#555;"></div>
<div class="r" style="left:12px;top:715px;width:7px;height:1px;background:#555;"></div>
<div class="r" style="left:13px;top:727px;width:2px;height:2px;background:#555;"></div>
<div class="r" style="left:13px;top:753px;width:2px;height:2px;background:#555;"></div>
<div class="r" style="left:12px;top:767px;width:7px;height:1px;background:#555;"></div>
<div class="r" style="left:13px;top:779px;width:2px;height:2px;background:#555;"></div>
<div class="r" style="left:13px;top:805px;width:2px;height:2px;background:#555;"></div>
<div class="r" style="left:12px;top:819px;width:7px;height:1px;background:#555;"></div>
<div class="r" style="left:13px;top:831px;width:2px;height:2px;background:#555;"></div>
<div class="r" style="left:13px;top:857px;width:2px;height:2px;background:#555;"></div>
<div class="r" style="left:12px;top:871px;width:7px;height:1px;background:#555;"></div>
<div class="r" style="left:13px;top:883px;width:2px;height:2px;background:#555;"></div>
<div class="r" style="left:13px;top:909px;width:2px;height:2px;background:#555;"></div>
<div class="r" style="left:12px;top:923px;width:7px;height:1px;background:#555;"></div>
<div class="t" style="left:-1.4000000000000004px;top:267px;width:30px;height:12px;text-align:center;font-size:12px;color:#555;transform:rotate(-90deg);transform-origin:15px 6px">1</div>
<div class="t" style="left:-1.4000000000000004px;top:371px;width:30px;height:12px;text-align:center;font-size:12px;color:#555;transform:rotate(-90deg);transform-origin:15px 6px">1</div>
<div class="t" style="left:-1.4000000000000004px;top:423px;width:30px;height:12px;text-align:center;font-size:12px;color:#555;transform:rotate(-90deg);transform-origin:15px 6px">2</div>
<div class="t" style="left:-1.4000000000000004px;top:475px;width:30px;height:12px;text-align:center;font-size:12px;color:#555;transform:rotate(-90deg);transform-origin:15px 6px">3</div>
<div class="t" style="left:-1.4000000000000004px;top:527px;width:30px;height:12px;text-align:center;font-size:12px;color:#555;transform:rotate(-90deg);transform-origin:15px 6px">4</div>
<div class="t" style="left:-1.4000000000000004px;top:579px;width:30px;height:12px;text-align:center;font-size:12px;color:#555;transform:rotate(-90deg);transform-origin:15px 6px">5</div>
<div class="t" style="left:-1.4000000000000004px;top:631px;width:30px;height:12px;text-align:center;font-size:12px;color:#555;transform:rotate(-90deg);transform-origin:15px 6px">6</div>
<div class="t" style="left:-1.4000000000000004px;top:683px;width:30px;height:12px;text-align:center;font-size:12px;color:#555;transform:rotate(-90deg);transform-origin:15px 6px">7</div>
<div class="t" style="left:-1.4000000000000004px;top:735px;width:30px;height:12px;text-align:center;font-size:12px;color:#555;transform:rotate(-90deg);transform-origin:15px 6px">8</div>
<div class="t" style="left:-1.4000000000000004px;top:787px;width:30px;height:12px;text-align:center;font-size:12px;color:#555;transform:rotate(-90deg);transform-origin:15px 6px">9</div>
<div class="t" style="left:-1.4000000000000004px;top:839px;width:30px;height:12px;text-align:center;font-size:12px;color:#555;transform:rotate(-90deg);transform-origin:15px 6px">10</div>
<div class="t" style="left:-1.4000000000000004px;top:891px;width:30px;height:12px;text-align:center;font-size:12px;color:#555;transform:rotate(-90deg);transform-origin:15px 6px">11</div>
<div class="r" style="left:1899px;top:236px;width:19px;height:699px;background:#e0e0e0;"></div>
<div class="r" style="left:1899px;top:236px;width:19px;height:18px;background:#eeeeee;"></div>
<svg class="r" style="left:1904px;top:243px" width="9" height="5" viewBox="0 0 9 5"><path d="M0 5L4.5 0L9 5Z" fill="#b0b0b0"/></svg>
<div class="r" style="left:1899px;top:282px;width:19px;height:278px;background:#ececec;border:1px solid #c9c9c9;box-sizing:border-box"></div>
<div class="r" style="left:1899px;top:915px;width:19px;height:18px;background:#eeeeee;"></div>
<svg class="r" style="left:1904px;top:921px" width="9" height="5" viewBox="0 0 9 5"><path d="M0 0L4.5 5L9 0Z" fill="#b0b0b0"/></svg>
<svg class="r" style="left:532px;top:336px" width="788" height="457" viewBox="0 0 788 457"><defs><pattern id="hp" patternUnits="userSpaceOnUse" width="4" height="4" x="2" y="0"><rect x="0" y="0" width="2" height="1"/><rect x="3" y="1" width="1" height="1"/><rect x="0" y="1" width="1" height="1"/><rect x="2" y="2" width="2" height="1"/><rect x="1" y="3" width="2" height="1"/></pattern></defs>
<path d="M0 0H788V457H0Z M5 5V452H783V5Z" fill="url(#hp)" fill-rule="evenodd" shape-rendering="crispEdges"/>
<g fill="#000" shape-rendering="crispEdges">
<rect x="0" y="0" width="5" height="5"/><rect x="783" y="0" width="5" height="5"/>
<rect x="0" y="452" width="5" height="5"/><rect x="783" y="452" width="5" height="5"/>
<rect x="392.0" y="0" width="5" height="5"/><rect x="392.0" y="452" width="5" height="5"/>
<rect x="0" y="226.0" width="5" height="5"/><rect x="783" y="226.0" width="5" height="5"/>
</g></svg>
<div class="r" style="left:537px;top:341px;width:778px;height:447px;background:#e6e6e6;"></div>
<div class="r" style="left:575px;top:367px;width:714px;height:392px;background:#ffffff;"></div>
<div class="r" style="left:673px;top:367px;width:1px;height:392px;background:#d9d9d9;"></div>
<div class="r" style="left:761px;top:367px;width:1px;height:392px;background:#d9d9d9;"></div>
<div class="r" style="left:849px;top:367px;width:1px;height:392px;background:#d9d9d9;"></div>
<div class="r" style="left:937px;top:367px;width:1px;height:392px;background:#d9d9d9;"></div>
<div class="r" style="left:1025px;top:367px;width:1px;height:392px;background:#d9d9d9;"></div>
<div class="r" style="left:1113px;top:367px;width:1px;height:392px;background:#d9d9d9;"></div>
<div class="r" style="left:1201px;top:367px;width:1px;height:392px;background:#d9d9d9;"></div>
<div class="r" style="left:575px;top:472px;width:714px;height:1px;background:#d9d9d9;"></div>
<div class="r" style="left:575px;top:498px;width:714px;height:1px;background:#d9d9d9;"></div>
<div class="r" style="left:575px;top:524px;width:714px;height:1px;background:#d9d9d9;"></div>
<div class="r" style="left:575px;top:550px;width:714px;height:1px;background:#d9d9d9;"></div>
<div class="r" style="left:575px;top:576px;width:714px;height:1px;background:#d9d9d9;"></div>
<div class="r" style="left:575px;top:629px;width:714px;height:1px;background:#d9d9d9;"></div>
<div class="r" style="left:575px;top:655px;width:714px;height:1px;background:#d9d9d9;"></div>
<div class="r" style="left:575px;top:681px;width:714px;height:1px;background:#d9d9d9;"></div>
<div class="r" style="left:575px;top:707px;width:714px;height:1px;background:#d9d9d9;"></div>
<div class="r" style="left:575px;top:733px;width:714px;height:1px;background:#d9d9d9;"></div>
<div class="r" style="left:673px;top:341px;width:1px;height:25px;background:#c8c8c8;"></div>
<div class="r" style="left:761px;top:341px;width:1px;height:25px;background:#c8c8c8;"></div>
<div class="r" style="left:849px;top:341px;width:1px;height:25px;background:#c8c8c8;"></div>
<div class="r" style="left:937px;top:341px;width:1px;height:25px;background:#c8c8c8;"></div>
<div class="r" style="left:1025px;top:341px;width:1px;height:25px;background:#c8c8c8;"></div>
<div class="r" style="left:1113px;top:341px;width:1px;height:25px;background:#c8c8c8;"></div>
<div class="r" style="left:1201px;top:341px;width:1px;height:25px;background:#c8c8c8;"></div>
<div class="r" style="left:537px;top:472px;width:37px;height:1px;background:#c8c8c8;"></div>
<div class="r" style="left:537px;top:498px;width:37px;height:1px;background:#c8c8c8;"></div>
<div class="r" style="left:537px;top:524px;width:37px;height:1px;background:#c8c8c8;"></div>
<div class="r" style="left:537px;top:550px;width:37px;height:1px;background:#c8c8c8;"></div>
<div class="r" style="left:537px;top:576px;width:37px;height:1px;background:#c8c8c8;"></div>
<div class="r" style="left:537px;top:629px;width:37px;height:1px;background:#c8c8c8;"></div>
<div class="r" style="left:537px;top:655px;width:37px;height:1px;background:#c8c8c8;"></div>
<div class="r" style="left:537px;top:681px;width:37px;height:1px;background:#c8c8c8;"></div>
<div class="r" style="left:537px;top:707px;width:37px;height:1px;background:#c8c8c8;"></div>
<div class="r" style="left:537px;top:733px;width:37px;height:1px;background:#c8c8c8;"></div>
<div class="r" style="left:537px;top:759px;width:37px;height:1px;background:#c8c8c8;"></div>
<div class="r" style="left:537px;top:366px;width:752px;height:1px;background:#9e9e9e;"></div>
<div class="r" style="left:574px;top:341px;width:1px;height:418px;background:#9e9e9e;"></div>
<div class="r" style="left:1289px;top:366px;width:1px;height:393px;background:#a6a6a6;"></div>
<div class="r" style="left:537px;top:759px;width:753px;height:1px;background:#a6a6a6;"></div>
<div class="r" style="left:850px;top:341px;width:87px;height:25px;background:#d2d2d2;"></div>
<div class="r" style="left:849px;top:341px;width:1px;height:25px;background:#acacac;"></div>
<div class="r" style="left:937px;top:341px;width:1px;height:25px;background:#acacac;"></div>
<div class="r" style="left:849px;top:365px;width:89px;height:2px;background:#22623f;"></div>
<div class="r" style="left:848px;top:758px;width:90px;height:2px;background:#2b5f44;"></div>
<svg class="r" style="left:553px;top:345px" width="18" height="18" viewBox="0 0 18 18"><path d="M18 0V17.5H0.5Z" fill="#b4b4b4"/></svg>
<div class="t" style="left:584.00px;top:347.12px;width:80px;text-align:center;font-size:17.5px;color:#222;font-weight:normal;">A</div>
<div class="t" style="left:677.50px;top:347.12px;width:80px;text-align:center;font-size:17.5px;color:#222;font-weight:normal;">B</div>
<div class="t" style="left:765.50px;top:347.12px;width:80px;text-align:center;font-size:17.5px;color:#222;font-weight:normal;">C</div>
<div class="t" style="left:853.50px;top:347.12px;width:80px;text-align:center;font-size:17.5px;color:#217346;font-weight:normal;">D</div>
<div class="t" style="left:941.50px;top:347.12px;width:80px;text-align:center;font-size:17.5px;color:#222;font-weight:normal;">E</div>
<div class="t" style="left:1029.50px;top:347.12px;width:80px;text-align:center;font-size:17.5px;color:#222;font-weight:normal;">F</div>
<div class="t" style="left:1117.50px;top:347.12px;width:80px;text-align:center;font-size:17.5px;color:#222;font-weight:normal;">G</div>
<div class="t" style="left:1205.50px;top:347.12px;width:80px;text-align:center;font-size:17.5px;color:#222;font-weight:normal;">H</div>
<div class="t" style="left:538.00px;top:452.12px;width:36px;text-align:center;font-size:17.5px;color:#222;font-weight:normal;">1</div>
<div class="t" style="left:538.00px;top:478.12px;width:36px;text-align:center;font-size:17.5px;color:#222;font-weight:normal;">2</div>
<div class="t" style="left:538.00px;top:504.12px;width:36px;text-align:center;font-size:17.5px;color:#222;font-weight:normal;">3</div>
<div class="t" style="left:538.00px;top:530.12px;width:36px;text-align:center;font-size:17.5px;color:#222;font-weight:normal;">4</div>
<div class="t" style="left:538.00px;top:556.12px;width:36px;text-align:center;font-size:17.5px;color:#222;font-weight:normal;">5</div>
<div class="t" style="left:538.00px;top:609.12px;width:36px;text-align:center;font-size:17.5px;color:#222;font-weight:normal;">6</div>
<div class="t" style="left:538.00px;top:635.12px;width:36px;text-align:center;font-size:17.5px;color:#222;font-weight:normal;">7</div>
<div class="t" style="left:538.00px;top:661.12px;width:36px;text-align:center;font-size:17.5px;color:#222;font-weight:normal;">8</div>
<div class="t" style="left:538.00px;top:687.12px;width:36px;text-align:center;font-size:17.5px;color:#222;font-weight:normal;">9</div>
<div class="t" style="left:538.00px;top:713.12px;width:36px;text-align:center;font-size:17.5px;color:#222;font-weight:normal;">10</div>
<div class="t" style="left:538.00px;top:739.12px;width:36px;text-align:center;font-size:17.5px;color:#222;font-weight:normal;">11</div>
<div class="t" style="left:564.00px;top:385.95px;width:120px;text-align:center;font-size:17.7px;color:#000;font-weight:bold;">Наименов</div>
<div class="t" style="left:564.00px;top:411.95px;width:120px;text-align:center;font-size:17.7px;color:#000;font-weight:bold;">ание</div>
<div class="t" style="left:564.00px;top:437.95px;width:120px;text-align:center;font-size:17.7px;color:#000;font-weight:bold;">товара</div>
<div class="t" style="left:657.50px;top:398.95px;width:120px;text-align:center;font-size:17.7px;color:#000;font-weight:bold;">Количест</div>
<div class="t" style="left:657.50px;top:424.95px;width:120px;text-align:center;font-size:17.7px;color:#000;font-weight:bold;">во</div>
<div class="t" style="left:745.50px;top:385.95px;width:120px;text-align:center;font-size:17.7px;color:#000;font-weight:bold;">Цена за</div>
<div class="t" style="left:745.50px;top:411.95px;width:120px;text-align:center;font-size:17.7px;color:#000;font-weight:bold;">единицу</div>
<div class="t" style="left:745.50px;top:437.95px;width:120px;text-align:center;font-size:17.7px;color:#000;font-weight:bold;">(₽)</div>
<div class="t" style="left:833.50px;top:385.95px;width:120px;text-align:center;font-size:17.7px;color:#000;font-weight:bold;">Общая</div>
<div class="t" style="left:833.50px;top:411.95px;width:120px;text-align:center;font-size:17.7px;color:#000;font-weight:bold;">стоимост</div>
<div class="t" style="left:833.50px;top:437.95px;width:120px;text-align:center;font-size:17.7px;color:#000;font-weight:bold;">ь (₽)</div>
<div class="t" style="left:921.50px;top:398.95px;width:120px;text-align:center;font-size:17.7px;color:#000;font-weight:bold;">Скидка</div>
<div class="t" style="left:921.50px;top:424.95px;width:120px;text-align:center;font-size:17.7px;color:#000;font-weight:bold;">(%)</div>
<div class="t" style="left:1009.50px;top:385.95px;width:120px;text-align:center;font-size:17.7px;color:#000;font-weight:bold;">Итоговая</div>
<div class="t" style="left:1009.50px;top:411.95px;width:120px;text-align:center;font-size:17.7px;color:#000;font-weight:bold;">стоимост</div>
<div class="t" style="left:1009.50px;top:437.95px;width:120px;text-align:center;font-size:17.7px;color:#000;font-weight:bold;">ь (₽)</div>
<div class="t" style="left:578.50px;top:477.40px;font-size:18px;color:#000;font-weight:normal;">Ноутбук</div>
<div class="t" style="left:671.50px;top:477.40px;width:86px;text-align:right;font-size:18px;color:#000;font-weight:normal;">33</div>
<div class="t" style="left:759.50px;top:477.40px;width:86px;text-align:right;font-size:18px;color:#000;font-weight:normal;">45</div>
<div class="t" style="left:847.50px;top:477.40px;width:86px;text-align:right;font-size:18px;color:#000;font-weight:normal;">1485</div>
<div class="t" style="left:935.50px;top:477.40px;width:86px;text-align:right;font-size:18px;color:#000;font-weight:normal;">10</div>
<div class="t" style="left:1023.50px;top:477.40px;width:86px;text-align:right;font-size:18px;color:#000;font-weight:normal;">1336,5</div>
<div class="t" style="left:578.50px;top:503.40px;font-size:18px;color:#000;font-weight:normal;">Смартфон</div>
<div class="t" style="left:671.50px;top:503.40px;width:86px;text-align:right;font-size:18px;color:#000;font-weight:normal;">5</div>
<div class="t" style="left:759.50px;top:503.40px;width:86px;text-align:right;font-size:18px;color:#000;font-weight:normal;">25</div>
<div class="t" style="left:847.50px;top:503.40px;width:86px;text-align:right;font-size:18px;color:#000;font-weight:normal;">125</div>
<div class="t" style="left:935.50px;top:503.40px;width:86px;text-align:right;font-size:18px;color:#000;font-weight:normal;">5</div>
<div class="t" style="left:1023.50px;top:503.40px;width:86px;text-align:right;font-size:18px;color:#000;font-weight:normal;">118,75</div>
<div class="t" style="left:578.50px;top:529.40px;font-size:18px;color:#000;font-weight:normal;">Планшет</div>
<div class="t" style="left:671.50px;top:529.40px;width:86px;text-align:right;font-size:18px;color:#000;font-weight:normal;">2</div>
<div class="t" style="left:759.50px;top:529.40px;width:86px;text-align:right;font-size:18px;color:#000;font-weight:normal;">30</div>
<div class="t" style="left:847.50px;top:529.40px;width:86px;text-align:right;font-size:18px;color:#000;font-weight:normal;">60</div>
<div class="t" style="left:935.50px;top:529.40px;width:86px;text-align:right;font-size:18px;color:#000;font-weight:normal;">15</div>
<div class="t" style="left:1023.50px;top:529.40px;width:86px;text-align:right;font-size:18px;color:#000;font-weight:normal;">51</div>
<div class="t" style="left:578.50px;top:555.40px;font-size:18px;color:#000;font-weight:normal;">Наушники</div>
<div class="t" style="left:671.50px;top:555.40px;width:86px;text-align:right;font-size:18px;color:#000;font-weight:normal;">10</div>
<div class="t" style="left:759.50px;top:555.40px;width:86px;text-align:right;font-size:18px;color:#000;font-weight:normal;">3,5</div>
<div class="t" style="left:847.50px;top:555.40px;width:86px;text-align:right;font-size:18px;color:#000;font-weight:normal;">35</div>
<div class="t" style="left:935.50px;top:555.40px;width:86px;text-align:right;font-size:18px;color:#000;font-weight:normal;">0</div>
<div class="t" style="left:1023.50px;top:555.40px;width:86px;text-align:right;font-size:18px;color:#000;font-weight:normal;">35</div>
<div class="t" style="left:578.50px;top:580.70px;font-size:18px;color:#000;font-weight:normal;">Умные</div>
<div class="t" style="left:578.50px;top:606.90px;font-size:18px;color:#000;font-weight:normal;">часы</div>
<div class="t" style="left:671.50px;top:593.70px;width:86px;text-align:right;font-size:18px;color:#000;font-weight:normal;">4</div>
<div class="t" style="left:759.50px;top:593.70px;width:86px;text-align:right;font-size:18px;color:#000;font-weight:normal;">15</div>
<div class="t" style="left:847.50px;top:593.70px;width:86px;text-align:right;font-size:18px;color:#000;font-weight:normal;">60</div>
<div class="t" style="left:935.50px;top:593.70px;width:86px;text-align:right;font-size:18px;color:#000;font-weight:normal;">20</div>
<div class="t" style="left:1023.50px;top:593.70px;width:86px;text-align:right;font-size:18px;color:#000;font-weight:normal;">48</div>
<div class="r" style="left:1290px;top:341px;width:25px;height:419px;background:#e6e6e6;"></div>
<div class="r" style="left:1293px;top:343px;width:19px;height:19px;background:#ffffff;border:1px solid #dadada;box-sizing:border-box"></div>
<svg class="r" style="left:1298px;top:350px" width="9" height="5" viewBox="0 0 9 5"><path d="M0 5L4.5 0L9 5Z" fill="#7a7a7a"/></svg>
<div class="r" style="left:1293px;top:362px;width:19px;height:265px;background:#ffffff;border:1px solid #ababab;box-sizing:border-box"></div>
<div class="r" style="left:1293px;top:627px;width:19px;height:114px;background:#dadada;"></div>
<div class="r" style="left:1293px;top:741px;width:19px;height:18px;background:#ffffff;border:1px solid #dadada;box-sizing:border-box"></div>
<svg class="r" style="left:1298px;top:749px" width="9" height="5" viewBox="0 0 9 5"><path d="M0 0L4.5 5L9 0Z" fill="#7a7a7a"/></svg>
<div class="r" style="left:537px;top:760px;width:778px;height:28px;background:#e6e6e6;"></div>
<svg class="r" style="left:564px;top:769px" width="6" height="9" viewBox="0 0 6 9"><path d="M6 0V9L0 4.5Z" fill="#c6c6c6"/></svg>
<svg class="r" style="left:594px;top:769px" width="6" height="9" viewBox="0 0 6 9"><path d="M0 0V9L6 4.5Z" fill="#c6c6c6"/></svg>
<div class="r" style="left:640px;top:759px;width:73px;height:26px;background:#ffffff;border-left:1px solid #ababab;border-right:1px solid #ababab;box-sizing:border-box"></div>
<div class="r" style="left:640px;top:783px;width:73px;height:2px;background:#217346;"></div>
<div class="t" style="left:635.70px;top:762.13px;width:80px;text-align:center;font-size:16.2px;color:#217346;font-weight:bold;">Лист1</div>
<svg class="r" style="left:745px;top:763px" width="22" height="22" viewBox="0 0 22 22"><circle cx="11" cy="11" r="9.6" fill="none" stroke="#7f7f7f" stroke-width="1.3"/><path d="M11 5.5V16.5M5.5 11H16.5" stroke="#666" stroke-width="1.8"/></svg>
<div class="r" style="left:1001px;top:767px;width:3px;height:3px;background:#b0b0b0;"></div>
<div class="r" style="left:1001px;top:772px;width:3px;height:3px;background:#b0b0b0;"></div>
<div class="r" style="left:1001px;top:777px;width:3px;height:3px;background:#b0b0b0;"></div>
<div class="r" style="left:1019px;top:764px;width:271px;height:19px;background:#dadada;"></div>
<div class="r" style="left:1019px;top:764px;width:19px;height:19px;background:#ffffff;border:1px solid #dadada;box-sizing:border-box"></div>
<svg class="r" style="left:1026px;top:769px" width="5" height="9" viewBox="0 0 5 9"><path d="M5 0V9L0 4.5Z" fill="#7a7a7a"/></svg>
<div class="r" style="left:1038px;top:764px;width:203px;height:19px;background:#ffffff;border:1px solid #ababab;box-sizing:border-box"></div>
<div class="r" style="left:1271px;top:764px;width:19px;height:19px;background:#ffffff;border:1px solid #dadada;box-sizing:border-box"></div>
<svg class="r" style="left:1278px;top:769px" width="5" height="9" viewBox="0 0 5 9"><path d="M0 0V9L5 4.5Z" fill="#7a7a7a"/></svg>
<div class="r" style="left:0px;top:935px;width:1918px;height:25px;background:#f1f1f1;border-top:1px solid #cfcfcf;box-sizing:border-box"></div>
<div class="t" style="left:5.50px;top:942.53px;font-size:12.9px;color:#444;font-weight:normal;">Дважды щелкните или дважды коснитесь, чтобы Правка Лист Microsoft Excel</div>
<div class="r" style="left:1622px;top:936px;width:41px;height:24px;background:#c6c6c6;"></div>
<svg class="r" style="left:1593px;top:940px" width="15" height="15" viewBox="0 0 15 15"><path d="M1 1.5H6.5L7.5 2.5L8.5 1.5H14V12.5H8.5L7.5 13.5L6.5 12.5H1Z" fill="#fff" stroke="#666" stroke-width="1"/>
<path d="M7.5 2.5V14.5M2.5 4H5.8M2.5 6.3H5.8M2.5 8.6H5.8M2.5 10.9H5.8M9.2 4H12.5M9.2 6.3H12.5M9.2 8.6H12.5M9.2 10.9H12.5" stroke="#666" stroke-width="1"/></svg>
<svg class="r" style="left:1634px;top:940px" width="16" height="15" viewBox="0 0 16 15"><rect x="1" y="1" width="14" height="13" fill="#fff" stroke="#666" stroke-width="1"/>
<path d="M3 3.5H13M3 5.8H13M3 8.1H13M3 10.4H13" stroke="#666" stroke-width="1"/></svg>
<svg class="r" style="left:1675px;top:940px" width="17" height="16" viewBox="0 0 17 16"><path d="M1 1H12V9H1Z" fill="#fff" stroke="#666" stroke-width="1"/><path d="M1 1V11.5H8" fill="none" stroke="#666" stroke-width="1"/>
<path d="M3 3.5H10M3 5.8H10M3 8.1H7" stroke="#666" stroke-width="1"/>
<circle cx="12" cy="11.5" r="3.8" fill="#666"/><path d="M10 10.5L12.5 10L13.5 12.5L12 14" fill="none" stroke="#fff" stroke-width="0.9"/></svg>
<div class="r" style="left:1709px;top:947px;width:9px;height:2px;background:#555;"></div>
<div class="r" style="left:1722px;top:948px;width:125px;height:1px;background:#999;"></div>
<div class="r" style="left:1784px;top:941px;width:5px;height:14px;background:#666;"></div>
<div class="r" style="left:1851px;top:947px;width:12px;height:2px;background:#555;"></div>
<div class="r" style="left:1856px;top:942px;width:2px;height:12px;background:#555;"></div>
<div class="t" style="left:1848.60px;top:942.72px;width:60px;text-align:right;font-size:12.1px;color:#444;font-weight:normal;">110%</div>
</body></html>
